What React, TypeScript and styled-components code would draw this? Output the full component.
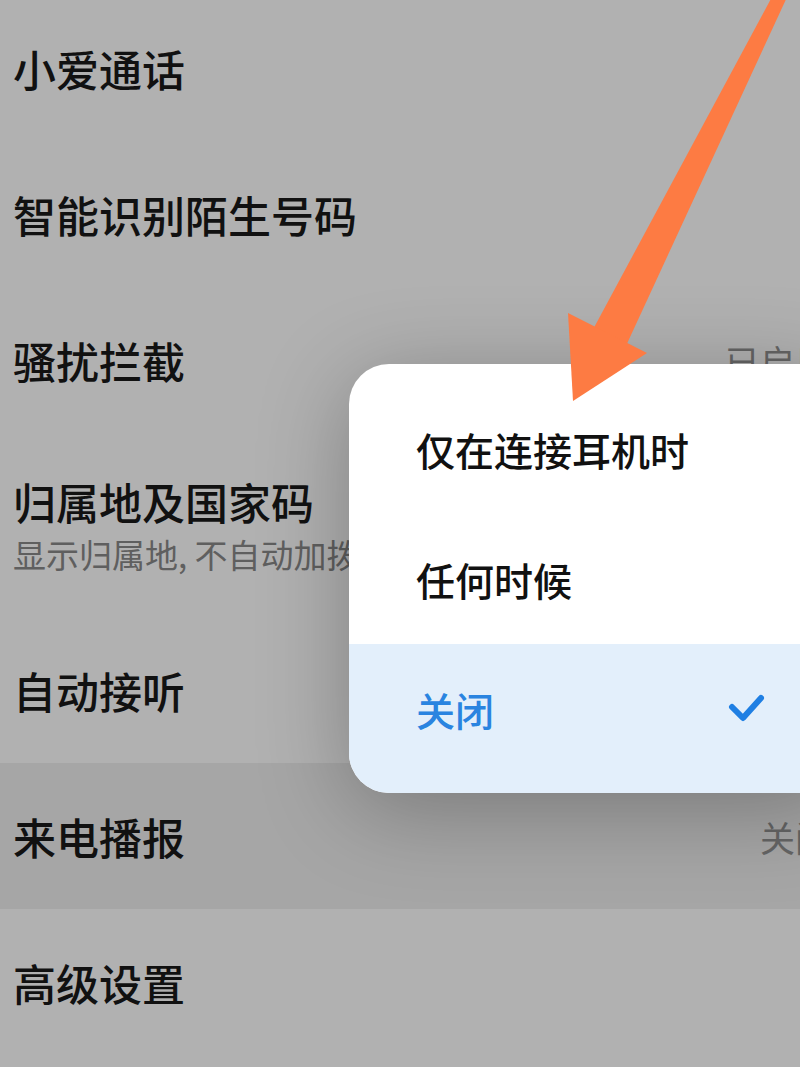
import styled, { createGlobalStyle } from 'styled-components';

const GlobalStyle = createGlobalStyle`
  html, body {
    margin: 0;
    padding: 0;
    background: #b1b1b1;
    overflow: hidden;
  }
  * {
    box-sizing: border-box;
  }
`;

const Screen = styled.div`
  position: relative;
  width: 800px;
  height: 1067px;
  overflow: hidden;
  background: #b1b1b1;
  font-family: 'Noto Sans CJK SC', 'Noto Sans', sans-serif;
`;

const List = styled.div`
  display: flex;
  flex-direction: column;
  margin-top: -5px;
`;

const Row = styled.div<{ $tall?: boolean; $pressed?: boolean }>`
  display: flex;
  align-items: center;
  justify-content: space-between;
  height: ${(p) => (p.$tall ? 184 : 146)}px;
  padding-left: 13px;
  background: ${(p) => (p.$pressed ? '#a6a6a6' : 'transparent')};
`;

const Texts = styled.div`
  display: flex;
  flex-direction: column;
  gap: 6px;
  min-width: 0;
`;

const Title = styled.div`
  font-size: 43px;
  font-weight: 500;
  line-height: 52px;
  color: #111;
  white-space: nowrap;
`;

const Subtitle = styled.div`
  font-size: 33px;
  line-height: 42px;
  color: #5f5f5f;
  white-space: nowrap;
`;

const Value = styled.div`
  font-size: 35px;
  color: #656565;
  white-space: nowrap;
  margin-right: -30px;
`;

const Menu = styled.div`
  position: absolute;
  left: 349px;
  top: 364px;
  width: 500px;
  padding-top: 20px;
  background: #fff;
  border-radius: 40px;
  overflow: hidden;
  box-shadow: 0 16px 90px rgba(0, 0, 0, 0.28);
`;

const MenuItem = styled.div<{ $selected?: boolean }>`
  display: flex;
  align-items: center;
  justify-content: space-between;
  height: 130px;
  padding: 0 0 0 67px;
  font-size: 39px;
  font-weight: 500;
  color: ${(p) => (p.$selected ? '#2a84e0' : '#111')};
  background: ${(p) => (p.$selected ? '#e3effb' : 'transparent')};

  &:last-child {
    height: 149px;
    padding-bottom: 19px;
  }
`;

const Check = styled.svg`
  width: 40px;
  height: 40px;
  margin-right: 82px;
`;

const Pointer = styled.svg`
  position: absolute;
  left: 0;
  top: 0;
  pointer-events: none;
`;

const rows = [
  { title: '小爱通话' },
  { title: '智能识别陌生号码' },
  { title: '骚扰拦截', value: '已启用' },
  { title: '归属地及国家码', sub: '显示归属地, 不自动加拨' },
  { title: '自动接听' },
  { title: '来电播报', value: '关闭', pressed: true },
  { title: '高级设置' },
];

const options = ['仅在连接耳机时', '任何时候', '关闭'];

export default function App() {
  return (
    <Screen>
      <GlobalStyle />
      <List>
        {rows.map((r) => (
          <Row key={r.title} $tall={!!r.sub} $pressed={r.pressed}>
            <Texts>
              <Title>{r.title}</Title>
              {r.sub && <Subtitle>{r.sub}</Subtitle>}
            </Texts>
            {r.value && <Value>{r.value}</Value>}
          </Row>
        ))}
      </List>

      <Menu>
        {options.map((o, i) => {
          const selected = i === options.length - 1;
          return (
            <MenuItem key={o} $selected={selected}>
              <span>{o}</span>
              {selected && (
                <Check viewBox="0 0 40 40">
                  <polyline
                    points="5,18 16,29 34,9"
                    fill="none"
                    stroke="#1f7fe3"
                    strokeWidth="6"
                    strokeLinecap="round"
                    strokeLinejoin="round"
                  />
                </Check>
              )}
            </MenuItem>
          );
        })}
      </Menu>

      {/* hand-drawn annotation arrow, tapering toward the top */}
      <Pointer width="800" height="1067" viewBox="0 0 800 1067">
        <polygon points="773,-5 590,335 625,348 788,-5" fill="#fd7b43" />
        <polygon points="568,313 647,353 573,401" fill="#fd7b43" />
      </Pointer>
    </Screen>
  );
}
